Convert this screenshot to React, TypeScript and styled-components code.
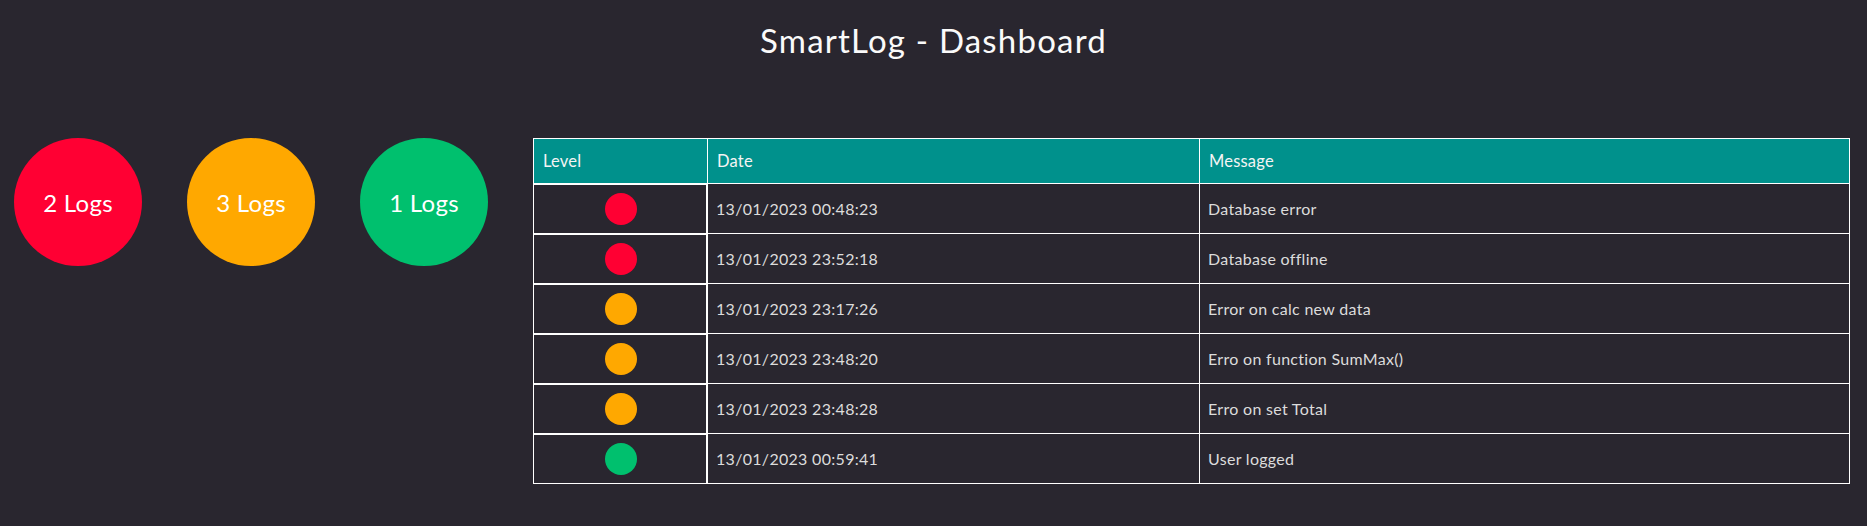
import React from "react";
import styled, { createGlobalStyle } from "styled-components";

const GlobalStyle = createGlobalStyle`
  html, body {
    margin: 0;
    padding: 0;
    background: #29262f;
  }
  body {
    font-family: Lato, "Noto Sans", sans-serif;
    color: #f2f2f2;
  }
`;

const Page = styled.div`
  width: 1867px;
  min-height: 526px;
  background: #29262f;
  display: flex;
  flex-direction: column;
`;

const Header = styled.header`
  padding-top: 21px;
  display: flex;
  justify-content: center;
`;

const Title = styled.h1`
  margin: 0;
  font-size: 33px;
  line-height: 38px;
  font-weight: 400;
  color: #fafafa;
  letter-spacing: 1.2px;
`;

const Main = styled.main`
  margin-top: 79px;
  display: flex;
  align-items: flex-start;
  gap: 45px;
  padding: 0 17px 0 14px;
`;

const Counters = styled.section`
  display: flex;
  gap: 45px;
`;

const Counter = styled.div<{ $color: string }>`
  width: 128px;
  height: 128px;
  border-radius: 50%;
  background: ${(p) => p.$color};
  display: flex;
  align-items: center;
  justify-content: center;
  font-size: 24px;
  letter-spacing: 0.3px;
  color: #ffffff;
  flex-shrink: 0;
`;

const Table = styled.table`
  flex: 1;
  border-collapse: collapse;
  table-layout: fixed;
  color: #e4e4e4;
`;

const HeadCell = styled.th`
  background: #00918c;
  border: 1px solid #ffffff;
  height: 44px;
  padding: 0 0 0 9px;
  text-align: left;
  font-size: 16.5px;
  font-weight: 400;
  letter-spacing: 0.2px;
  color: #f4f4f4;
`;

const Cell = styled.td`
  border: 1px solid #ffffff;
  height: 49px;
  padding: 0 0 0 8px;
  font-size: 16px;
  font-weight: 400;
  letter-spacing: 0.3px;
  color: #dcdcdc;
`;

const LevelCell = styled.td`
  border: 1px solid #ffffff;
  height: 49px;
  padding: 0;
  box-shadow: inset 0 1px 0 #ffffff, inset -1px 0 0 #ffffff;
`;

const DotWrap = styled.div`
  display: flex;
  justify-content: center;
  align-items: center;
`;

const Dot = styled.span<{ $color: string }>`
  width: 32px;
  height: 32px;
  border-radius: 50%;
  background: ${(p) => p.$color};
  display: block;
`;

const COLORS = {
  error: "#ff0033",
  warning: "#ffa800",
  info: "#00c06e",
};

type Level = keyof typeof COLORS;

const logs: { level: Level; date: string; message: string }[] = [
  { level: "error", date: "13/01/2023 00:48:23", message: "Database error" },
  { level: "error", date: "13/01/2023 23:52:18", message: "Database offline" },
  { level: "warning", date: "13/01/2023 23:17:26", message: "Error on calc new data" },
  { level: "warning", date: "13/01/2023 23:48:20", message: "Erro on function SumMax()" },
  { level: "warning", date: "13/01/2023 23:48:28", message: "Erro on set Total" },
  { level: "info", date: "13/01/2023 00:59:41", message: "User logged" },
];

export default function App() {
  const count = (l: Level) => logs.filter((x) => x.level === l).length;
  return (
    <Page>
      <GlobalStyle />
      <Header>
        <Title>SmartLog - Dashboard</Title>
      </Header>
      <Main>
        <Counters>
          <Counter $color={COLORS.error}>{count("error")} Logs</Counter>
          <Counter $color={COLORS.warning}>{count("warning")} Logs</Counter>
          <Counter $color={COLORS.info}>{count("info")} Logs</Counter>
        </Counters>
        <Table>
          <colgroup>
            <col style={{ width: "174px" }} />
            <col style={{ width: "492px" }} />
            <col />
          </colgroup>
          <thead>
            <tr>
              <HeadCell>Level</HeadCell>
              <HeadCell>Date</HeadCell>
              <HeadCell>Message</HeadCell>
            </tr>
          </thead>
          <tbody>
            {logs.map((l, i) => (
              <tr key={i}>
                <LevelCell>
                  <DotWrap>
                    <Dot $color={COLORS[l.level]} />
                  </DotWrap>
                </LevelCell>
                <Cell>{l.date}</Cell>
                <Cell>{l.message}</Cell>
              </tr>
            ))}
          </tbody>
        </Table>
      </Main>
    </Page>
  );
}
